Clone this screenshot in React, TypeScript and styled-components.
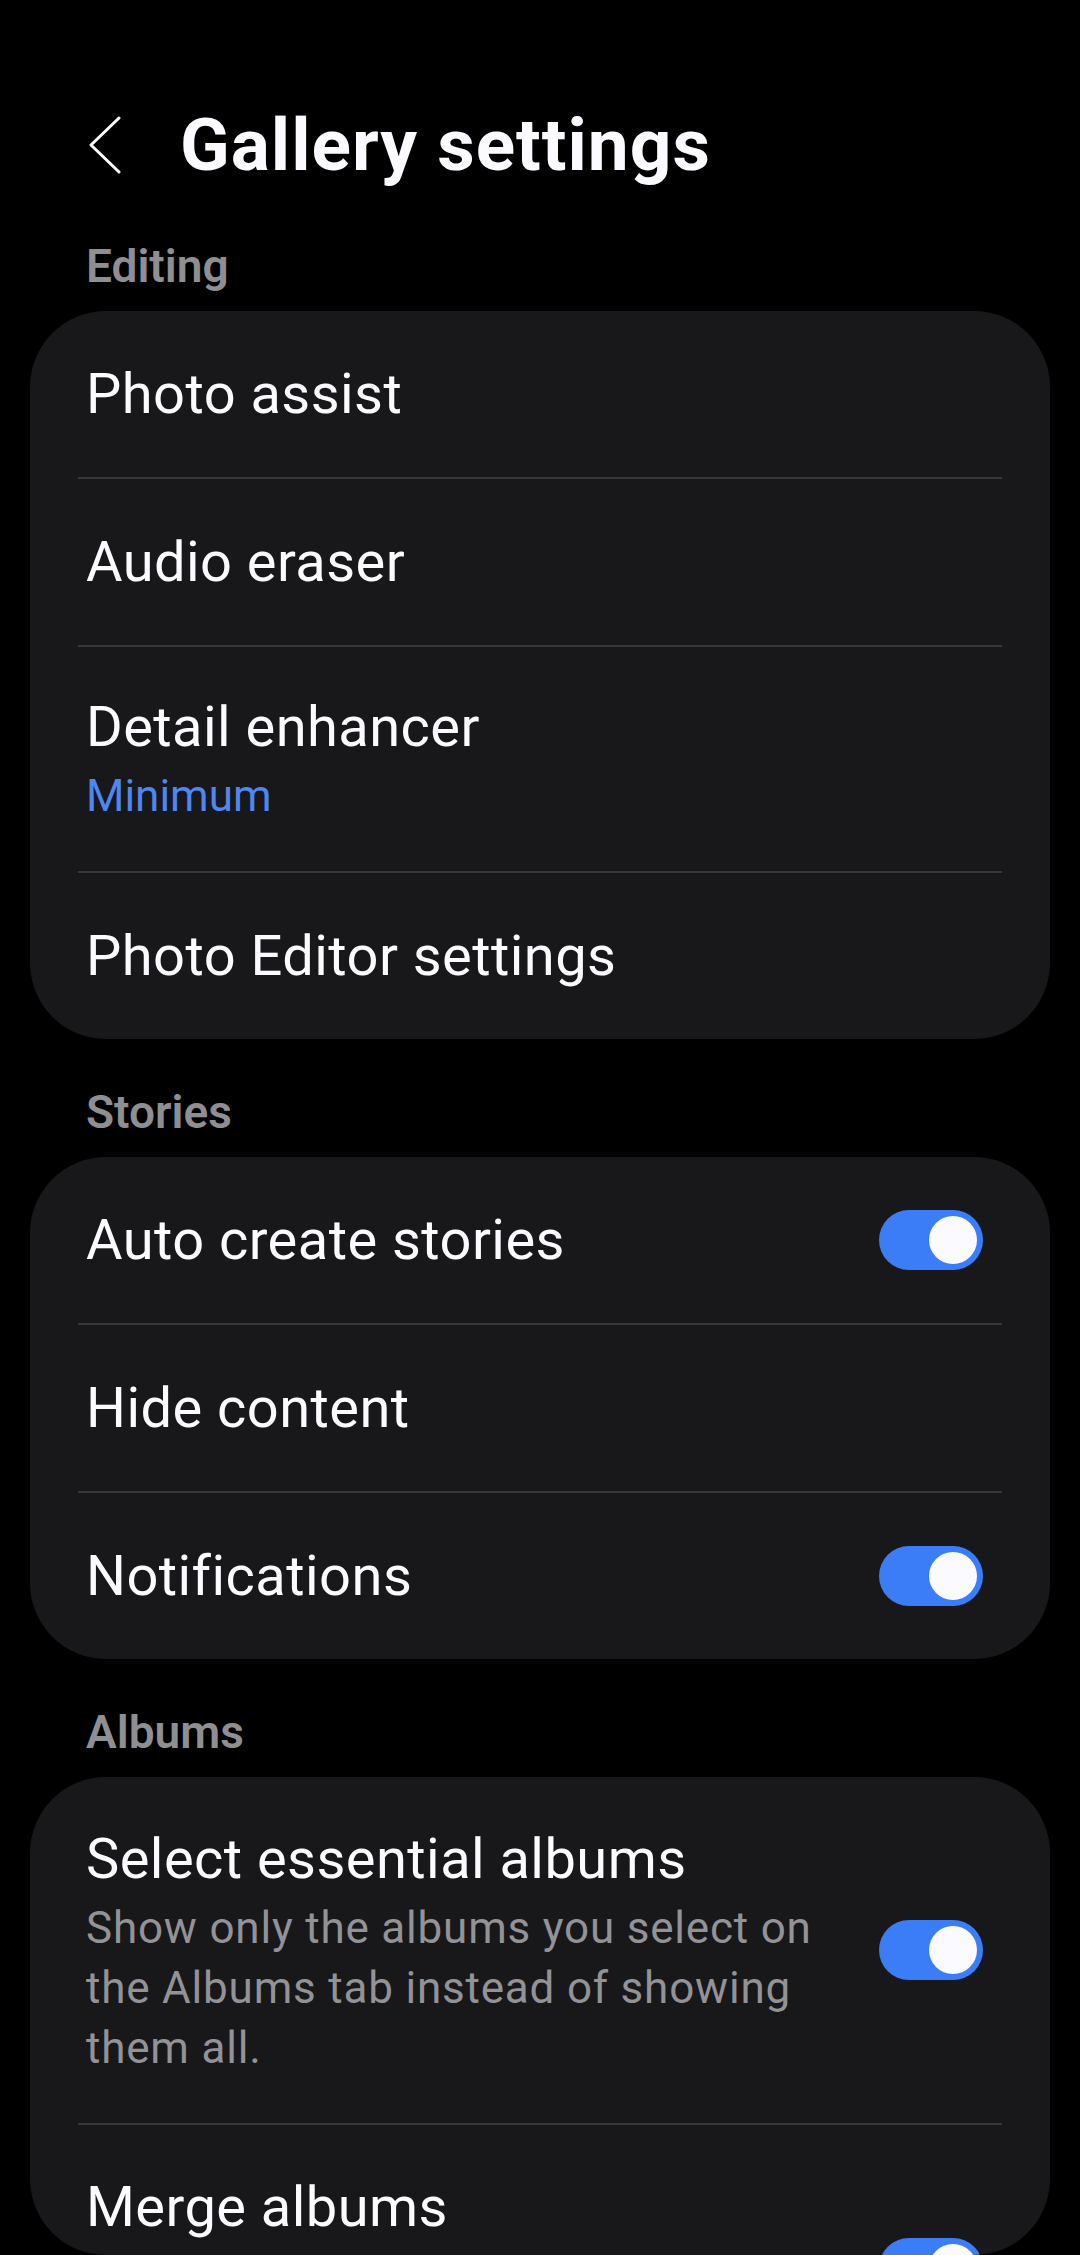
import React from "react"
import styled, { createGlobalStyle } from "styled-components"

const GlobalStyle = createGlobalStyle`
  html, body {
    margin: 0;
    padding: 0;
    background: #000;
  }
  body {
    font-family: Roboto, "Noto Sans", "Liberation Sans", sans-serif;
    color: #fafaff;
    -webkit-font-smoothing: antialiased;
  }
`

const Page = styled.div`
  height: 2255px;
  display: flex;
  flex-direction: column;
  background: #000;
  overflow: hidden;
`

const TopBar = styled.header`
  display: flex;
  align-items: center;
  height: 170px;
  margin-top: 60px;
  padding-left: 89px;
  flex-shrink: 0;
`

const BackButton = styled.button`
  display: flex;
  align-items: center;
  justify-content: center;
  padding: 0;
  border: 0;
  background: none;
  color: #fafaff;
  cursor: pointer;
`

const Title = styled.h1`
  margin: 0 0 0 59px;
  font-size: 73px;
  line-height: 1;
  font-weight: 700;
  letter-spacing: 1px;
`

const ScrollArea = styled.main`
  flex: 1;
  margin: 0 30px;
  overflow: hidden;
  border-radius: 0 0 76px 76px;
`

const SectionLabel = styled.h2<{ $first?: boolean }>`
  margin: 0;
  padding: ${({ $first }) => ($first ? "13px" : "50px")} 0 22px 56px;
  font-size: 46px;
  line-height: 46px;
  font-weight: 600;
  color: #8e8e93;
`

const Card = styled.section`
  background: #18181b;
  border-radius: 76px;
  overflow: hidden;
`

const Divider = styled.div`
  height: 2px;
  margin: 0 48px;
  background: #38383b;
`

const Row = styled.div`
  display: flex;
  align-items: center;
  min-height: 166px;
  padding: 0 67px 0 56px;
`

type Spacing = "none" | "value" | "description"

const paddings: Record<Spacing, string> = {
  none: "0",
  value: "52px 0 53px",
  description: "54px 0 45px",
}

const TextBlock = styled.div<{ $spacing: Spacing; $minHeight?: number }>`
  flex: 1;
  min-width: 0;
  margin-right: 40px;
  padding: ${({ $spacing }) => paddings[$spacing]};
  min-height: ${({ $minHeight }) => ($minHeight ? `${$minHeight}px` : "auto")};
  box-sizing: border-box;
`

const Label = styled.div`
  font-size: 56px;
  line-height: 56px;
  font-weight: 400;
  letter-spacing: 0.45px;
  color: #fafaff;
`

const Value = styled.div`
  margin-top: 19px;
  font-size: 44px;
  line-height: 44px;
  color: #4f86f0;
`

const Description = styled.div`
  margin-top: 11px;
  font-size: 44px;
  line-height: 60px;
  letter-spacing: 0.8px;
  color: #929297;
`

const Track = styled.div<{ $on: boolean }>`
  flex-shrink: 0;
  position: relative;
  width: 104px;
  height: 60px;
  border-radius: 30px;
  background: ${({ $on }) => ($on ? "#3b7df6" : "#5a5a5e")};
`

const Knob = styled.div<{ $on: boolean }>`
  position: absolute;
  top: 6px;
  left: ${({ $on }) => ($on ? "50px" : "6px")};
  width: 48px;
  height: 48px;
  border-radius: 50%;
  background: #fafaff;
`

const Toggle = ({ on }: { on: boolean }) => (
  <Track $on={on}>
    <Knob $on={on} />
  </Track>
)

const ChevronLeft = () => (
  <svg width="32" height="58" viewBox="0 0 32 58" fill="none">
    <polyline
      points="30,2 2,29 30,56"
      stroke="currentColor"
      strokeWidth="3"
      strokeLinecap="round"
      strokeLinejoin="round"
    />
  </svg>
)

type Item = {
  label: string
  value?: string
  description?: string
  toggle?: boolean
  minHeight?: number
}

type Section = { title: string; items: Item[] }

const sections: Section[] = [
  {
    title: "Editing",
    items: [
      { label: "Photo assist" },
      { label: "Audio eraser" },
      { label: "Detail enhancer", value: "Minimum" },
      { label: "Photo Editor settings" },
    ],
  },
  {
    title: "Stories",
    items: [
      { label: "Auto create stories", toggle: true },
      { label: "Hide content" },
      { label: "Notifications", toggle: true },
    ],
  },
  {
    title: "Albums",
    items: [
      {
        label: "Select essential albums",
        description:
          "Show only the albums you select on the Albums tab instead of showing them all.",
        toggle: true,
      },
      { label: "Merge albums", toggle: true, minHeight: 285 },
    ],
  },
]

const SettingRow = ({ label, value, description, toggle, minHeight }: Item) => {
  const spacing: Spacing = value
    ? "value"
    : description || minHeight
      ? "description"
      : "none"

  return (
    <Row>
      <TextBlock $spacing={spacing} $minHeight={minHeight}>
        <Label>{label}</Label>
        {value && <Value>{value}</Value>}
        {description && <Description>{description}</Description>}
      </TextBlock>
      {toggle !== undefined && <Toggle on={toggle} />}
    </Row>
  )
}

const App = () => (
  <Page>
    <GlobalStyle />
    <TopBar>
      <BackButton aria-label="Back">
        <ChevronLeft />
      </BackButton>
      <Title>Gallery settings</Title>
    </TopBar>
    <ScrollArea>
      {sections.map(({ title, items }, i) => (
        <div key={title}>
          <SectionLabel $first={i === 0}>{title}</SectionLabel>
          <Card>
            {items.map((item, j) => (
              <React.Fragment key={item.label}>
                {j > 0 && <Divider />}
                <SettingRow {...item} />
              </React.Fragment>
            ))}
          </Card>
        </div>
      ))}
    </ScrollArea>
  </Page>
)

export default App
